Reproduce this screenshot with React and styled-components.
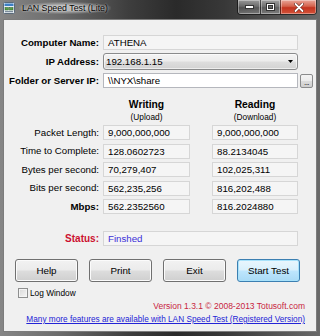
import React from "react";
import styled, { createGlobalStyle } from "styled-components";

const GlobalStyle = createGlobalStyle`
  html, body { margin: 0; padding: 0; background: #3a3a3a; }
  body { width: 320px; height: 336px; overflow: hidden; }
`;

const Window = styled.div`
  width: 320px;
  height: 336px;
  box-sizing: border-box;
  padding: 0 3px 4px;
  display: flex;
  flex-direction: column;
  background: linear-gradient(90deg, #868686 0%, #6c6c6c 18%, #3e3e3e 40%, #2a2a2a 55%, #383838 70%, #6a6a6a 100%);
  font-family: "Liberation Sans", Arial, sans-serif;
`;

const TitleBar = styled.div`
  height: 19px;
  flex-shrink: 0;
  display: flex;
  align-items: flex-start;
`;

const AppIcon = styled.svg`
  width: 12px;
  height: 12px;
  margin-top: 2px;
  flex-shrink: 0;
`;

const TitleText = styled.span`
  margin: 2px 0 0 4px;
  padding: 0 3px;
  font-size: 8.8px;
  line-height: 12px;
  color: #000;
  white-space: nowrap;
  background: radial-gradient(ellipse at center, rgba(215, 215, 215, 0.75) 30%, rgba(215, 215, 215, 0) 75%);
  text-shadow: 0 0 2px rgba(240, 240, 240, 0.9);
`;

const Controls = styled.div`
  margin-left: auto;
  display: flex;
  height: 14px;
  border: 1px solid rgba(0, 0, 0, 0.55);
  border-top: none;
  border-radius: 0 0 4px 4px;
  overflow: hidden;
`;

const CtrlBtn = styled.div`
  width: ${(p) => p.$w}px;
  height: 100%;
  box-sizing: border-box;
  display: flex;
  align-items: center;
  justify-content: center;
  border-left: ${(p) => (p.$first ? "none" : "1px solid rgba(0,0,0,0.5)")};
  background: ${(p) =>
    p.$close
      ? "linear-gradient(#e9a699 0%, #d4624c 45%, #c3341f 55%, #d5533a 100%)"
      : "linear-gradient(rgba(255,255,255,0.45) 0%, rgba(255,255,255,0.2) 45%, rgba(255,255,255,0.08) 55%, rgba(255,255,255,0.25) 100%)"};
  box-shadow: inset 0 0 0 1px rgba(255, 255, 255, 0.35);
`;

const Client = styled.div`
  flex: 1;
  box-sizing: border-box;
  background: #f0f0f0;
  border: 1px solid #7c7c7c;
  padding-top: 15px;
  display: flex;
  flex-direction: column;
`;

const TopForm = styled.div`
  display: grid;
  grid-template-columns: 99px 195px 15px;
  grid-template-rows: 15px 17px 15px;
  row-gap: 3px;
`;

const Label = styled.div`
  align-self: center;
  text-align: right;
  padding-right: 4px;
  font-size: ${(p) => p.$size || 9.7}px;
  font-weight: ${(p) => (p.$bold ? "bold" : "normal")};
  color: ${(p) => p.$color || "#000"};
  white-space: nowrap;
  line-height: 12px;
`;

const Field = styled.div`
  box-sizing: border-box;
  height: 15px;
  align-self: ${(p) => (p.$end ? "end" : "center")};
  grid-column: ${(p) => p.$col || "auto"};
  border: 1px solid ${(p) => (p.$white ? "#b5b7bd" : "#d6d6d6")};
  background: ${(p) => (p.$white ? "#ffffff" : "#f5f5f5")};
  padding-left: 4px;
  font-size: 9.7px;
  line-height: 13px;
  color: ${(p) => p.$color || "#000"};
  white-space: nowrap;
  overflow: hidden;
`;

const Select = styled.div`
  box-sizing: border-box;
  height: 17px;
  border: 1px solid #8a8b8c;
  border-radius: 3px;
  background: linear-gradient(#f4f4f4 0%, #ececec 48%, #dedede 52%, #d2d2d2 100%);
  box-shadow: inset 0 0 0 1px rgba(255, 255, 255, 0.6);
  padding: 0 4px 0 2px;
  display: flex;
  align-items: center;
  justify-content: space-between;
  font-size: 9.7px;
  color: #000;
`;

const Browse = styled.div`
  justify-self: end;
  align-self: end;
  width: 13px;
  height: 14px;
  box-sizing: border-box;
  border: 1px solid #8a8b8c;
  border-radius: 2px;
  background: linear-gradient(#f4f4f4 0%, #ececec 48%, #dcdcdc 52%, #cfcfcf 100%);
  font-size: 8px;
  line-height: 15px;
  text-align: center;
  color: #000;
  letter-spacing: -0.5px;
`;

const Results = styled.div`
  margin-top: 10px;
  display: grid;
  grid-template-columns: 99px 87px 22px 86px;
  grid-template-rows: 23.5px repeat(5, 15px) 28px;
  row-gap: 3.5px;
`;

const Head = styled.div`
  grid-column: ${(p) => p.$col};
  padding-top: 1px;
  display: flex;
  flex-direction: column;
  align-items: center;
  color: #000;
`;

const HeadMain = styled.span`
  font-size: 10.3px;
  font-weight: bold;
  line-height: 12px;
`;

const HeadSub = styled.span`
  font-size: 8.3px;
  line-height: 12px;
`;

const StatusLabel = styled(Label)`
  grid-column: 1;
  align-self: end;
  line-height: 15px;
`;

const ButtonRow = styled.div`
  margin-top: 13.5px;
  padding-left: 11px;
  display: grid;
  grid-template-columns: repeat(4, 63px);
  column-gap: 11px;
`;

const Button = styled.div`
  height: 23px;
  box-sizing: border-box;
  border: 1px solid ${(p) => (p.$default ? "#3c7fb1" : "#707070")};
  border-radius: 3px;
  background: ${(p) =>
    p.$default
      ? "linear-gradient(#eaf6fd 0%, #d9f0fc 48%, #bee6fd 52%, #a9daf6 100%)"
      : "linear-gradient(#f2f2f2 0%, #ebebeb 48%, #dddddd 52%, #cfcfcf 100%)"};
  box-shadow: inset 0 0 0 1px ${(p) => (p.$default ? "#a8e2fb" : "#fbfbfb")};
  display: flex;
  align-items: center;
  justify-content: center;
  font-size: 9.8px;
  color: #000;
`;

const CheckRow = styled.div`
  margin-top: 6px;
  padding-left: 14px;
  display: flex;
  align-items: center;
  height: 10px;
`;

const CheckBox = styled.div`
  width: 10px;
  height: 10px;
  box-sizing: border-box;
  border: 1px solid #8e8f8f;
  background: linear-gradient(135deg, #d8d8d8, #f6f6f6);
  box-shadow: inset 0 0 0 1px #f4f4f4;
`;

const CheckText = styled.span`
  margin-left: 2px;
  font-size: 8.3px;
  color: #000;
  line-height: 10px;
`;

const InfoLine = styled.div`
  margin-top: 2px;
  padding-right: 11px;
  text-align: right;
  font-size: ${(p) => p.$size}px;
  line-height: 12px;
  color: ${(p) => p.$color};
  text-decoration: ${(p) => (p.$link ? "underline" : "none")};
  white-space: nowrap;
`;

export default function App() {
  const rows = [
    ["Packet Length:", "9,000,000,000", "9,000,000,000", false],
    ["Time to Complete:", "128.0602723", "88.2134045", false],
    ["Bytes per second:", "70,279,407", "102,025,311", false],
    ["Bits per second:", "562,235,256", "816,202,488", false],
    ["Mbps:", "562.2352560", "816.2024880", true],
  ];
  return (
    <>
      <GlobalStyle />
      <Window>
        <TitleBar>
          <AppIcon viewBox="0 0 12 12">
            <rect x="0.5" y="0.5" width="11" height="11" rx="1" fill="#e8eef4" stroke="#5a6a7a" />
            <rect x="1.5" y="1.5" width="9" height="2.5" fill="#3d7fc4" />
            <rect x="2" y="5.5" width="3.5" height="2.5" fill="#5aa04a" stroke="#2f5f2a" strokeWidth="0.5" />
            <rect x="6.5" y="5.5" width="3.5" height="2.5" fill="#5aa04a" stroke="#2f5f2a" strokeWidth="0.5" />
            <rect x="2" y="9" width="8" height="1.2" fill="#7a8a9a" />
          </AppIcon>
          <TitleText>LAN Speed Test (Lite)</TitleText>
          <Controls>
            <CtrlBtn $w={22} $first>
              <svg width="9" height="4" viewBox="0 0 9 4">
                <rect x="0.5" y="0.5" width="8" height="3" fill="#fff" stroke="#333" strokeWidth="1" />
              </svg>
            </CtrlBtn>
            <CtrlBtn $w={20}>
              <svg width="9" height="8" viewBox="0 0 9 8">
                <rect x="0.5" y="0.5" width="8" height="7" fill="none" stroke="#333" strokeWidth="1" />
                <rect x="1.5" y="1.5" width="6" height="5" fill="none" stroke="#fff" strokeWidth="1" />
                <rect x="2.5" y="2.5" width="4" height="3" fill="none" stroke="#333" strokeWidth="1" />
              </svg>
            </CtrlBtn>
            <CtrlBtn $w={36} $close>
              <svg width="10" height="9" viewBox="0 0 10 9">
                <path d="M1.5 1 L8.5 8 M8.5 1 L1.5 8" stroke="#5a1a10" strokeWidth="3" strokeLinecap="round" />
                <path d="M1.5 1 L8.5 8 M8.5 1 L1.5 8" stroke="#fff" strokeWidth="1.8" strokeLinecap="round" />
              </svg>
            </CtrlBtn>
          </Controls>
        </TitleBar>
        <Client>
          <TopForm>
            <Label $bold>Computer Name:</Label>
            <Field>ATHENA</Field>
            <span />
            <Label $bold>IP Address:</Label>
            <Select>
              <span>192.168.1.15</span>
              <svg width="5" height="3" viewBox="0 0 5 3">
                <path d="M0 0 H5 L2.5 3 Z" fill="#000" />
              </svg>
            </Select>
            <span />
            <Label $bold>Folder or Server IP:</Label>
            <Field $white>\\NYX\share</Field>
            <Browse>...</Browse>
          </TopForm>
          <Results>
            <Head $col={2}>
              <HeadMain>Writing</HeadMain>
              <HeadSub>(Upload)</HeadSub>
            </Head>
            <Head $col={4}>
              <HeadMain>Reading</HeadMain>
              <HeadSub>(Download)</HeadSub>
            </Head>
            {rows.map(([label, w, r, bold]) => (
              <React.Fragment key={label}>
                <Label $bold={bold} style={{ gridColumn: 1 }}>{label}</Label>
                <Field $col="2">{w}</Field>
                <Field $col="4">{r}</Field>
              </React.Fragment>
            ))}
            <StatusLabel $bold $color="#cc1030" $size={10}>Status:</StatusLabel>
            <Field $col="2 / 5" $end $color="#3b2fd8">Finshed</Field>
          </Results>
          <ButtonRow>
            <Button>Help</Button>
            <Button>Print</Button>
            <Button>Exit</Button>
            <Button $default>Start Test</Button>
          </ButtonRow>
          <CheckRow>
            <CheckBox />
            <CheckText>Log Window</CheckText>
          </CheckRow>
          <InfoLine $size={8.5} $color="#c8243e">Version 1.3.1 © 2008-2013 Totusoft.com</InfoLine>
          <InfoLine $size={8.25} $color="#2323d6" $link>
            Many more features are available with LAN Speed Test (Registered Version)
          </InfoLine>
        </Client>
      </Window>
    </>
  );
}
